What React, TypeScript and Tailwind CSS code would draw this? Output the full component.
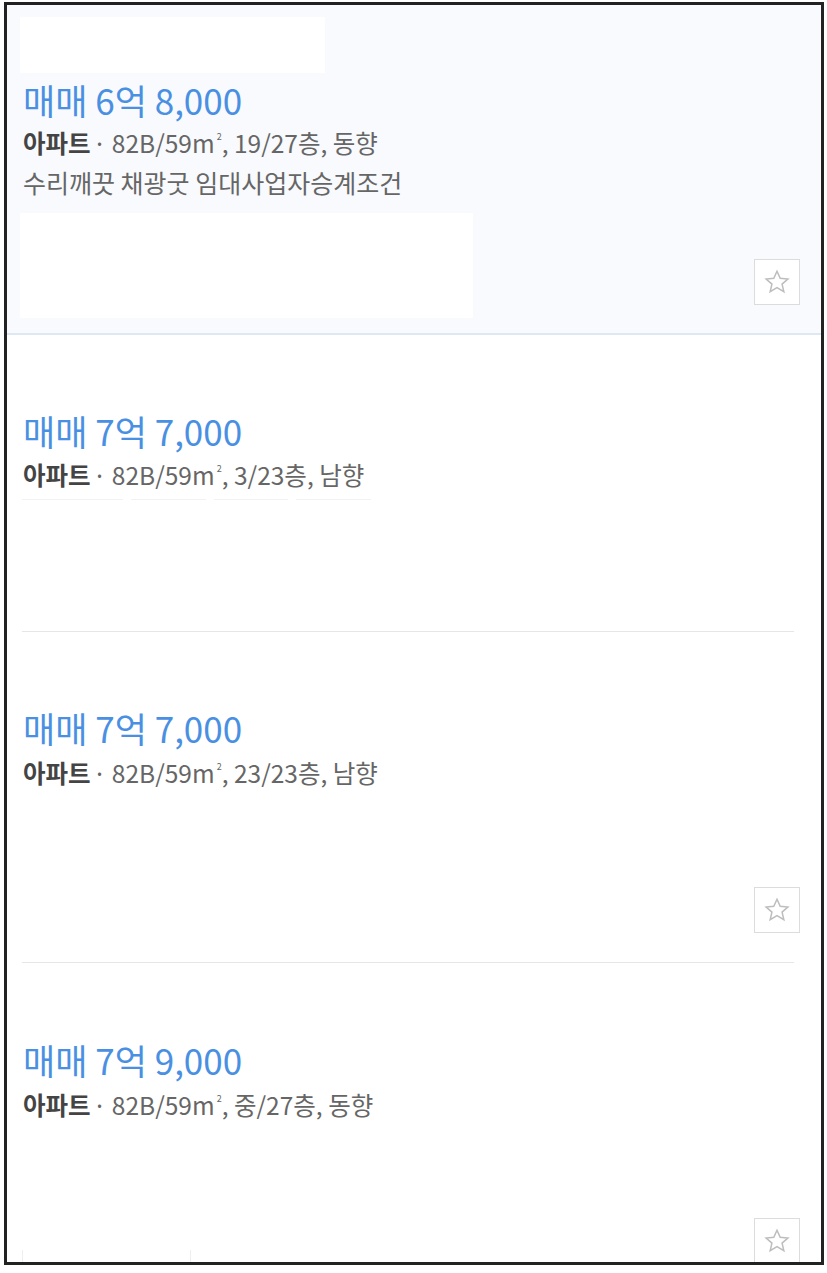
import React from "react";

const FONT = { fontFamily: '"Noto Sans CJK KR", "Noto Sans", sans-serif' };

function StarButton({ className }: { className: string }) {
  return (
    <div
      className={`absolute w-[46px] h-[46px] border border-[#dcdcdc] bg-white flex items-center justify-center ${className}`}
    >
      <svg width="28" height="28" viewBox="0 0 24 24" fill="none" stroke="#bdbdbd" strokeWidth="1.3" strokeLinejoin="miter">
        <path d="M12 2.8l2.75 6.05 6.55.6-4.95 4.35 1.5 6.45L12 16.9l-5.85 3.35 1.5-6.45L2.7 9.45l6.55-.6z" />
      </svg>
    </div>
  );
}

function Title({ text }: { text: string }) {
  return <div className="h-[40px] leading-[40px] text-[35px] text-[#4a90e2] whitespace-nowrap">{text}</div>;
}

function Spec({ floor, dir, className = "" }: { floor: string; dir: string; className?: string }) {
  return (
    <div className={`h-[34px] leading-[34px] text-[24.5px] text-[#666666] whitespace-nowrap ${className}`}>
      <span className="font-bold text-[#444444]">아파트</span>
      <span className="ml-[2px]">· 82B/59m</span>
      <span className="text-[9px] leading-none relative top-[-13px] ml-[2px]">2</span>
      <span>, {floor}층, {dir}</span>
    </div>
  );
}

export default function App() {
  return (
    <div className="w-[827px] h-[1273px] bg-white relative" style={FONT}>
      <div className="ml-[4px] pt-[2px]">
        <div className="w-[820px] h-[1263px] border-[3px] border-[#222222] overflow-hidden flex flex-col">
          {/* Card 1 */}
          <div className="relative h-[330px] shrink-0 bg-[#f8fafd] border-b-2 border-[#dde8f4] pl-[13px] pt-[12px] flex flex-col">
            <div className="w-[305px] h-[56px] bg-white" />
            <div className="mt-[7px] pl-[3px]">
              <Title text="매매 6억 8,000" />
              <Spec floor="19/27" dir="동향" className="mt-[6px]" />
              <div className="mt-[5px] h-[34px] leading-[34px] text-[25px] text-[#666666] whitespace-nowrap">
                수리깨끗 채광굿 임대사업자승계조건
              </div>
            </div>
            <div className="mt-[14px] w-[453px] h-[105px] bg-white" />
            <StarButton className="right-[21px] bottom-[28px]" />
          </div>

          {/* Card 2 */}
          <div className="h-[297px] shrink-0 flex flex-col">
            <div className="flex-1 pl-[16px] pt-[76px]">
              <Title text="매매 7억 7,000" />
              <Spec floor="3/23" dir="남향" className="mt-[7px]" />
              <div className="flex gap-[8px] mt-[7px] ml-[-1px]">
                <div className="w-[101px] h-px bg-[#f2f2f2]" />
                <div className="w-[75px] h-px bg-[#f2f2f2]" />
                <div className="w-[74px] h-px bg-[#f2f2f2]" />
                <div className="w-[75px] h-px bg-[#f2f2f2]" />
              </div>
            </div>
            <div className="ml-[15px] mr-[27px] h-px bg-[#e6e6e6]" />
          </div>

          {/* Card 3 */}
          <div className="relative h-[331px] shrink-0 flex flex-col">
            <div className="flex-1 pl-[16px] pt-[76px]">
              <Title text="매매 7억 7,000" />
              <Spec floor="23/23" dir="남향" className="mt-[8px]" />
            </div>
            <StarButton className="right-[21px] top-[255px]" />
            <div className="ml-[15px] mr-[27px] h-px bg-[#e6e6e6]" />
          </div>

          {/* Card 4 */}
          <div className="relative flex-1 flex flex-col">
            <div className="flex-1 pl-[16px] pt-[77px]">
              <Title text="매매 7억 9,000" />
              <Spec floor="중/27" dir="동향" className="mt-[8px]" />
            </div>
            <StarButton className="right-[21px] top-[255px]" />
            <div className="absolute left-[15px] bottom-0 w-[169px] h-[12px] border-l border-r border-[#eeeeee]" />
          </div>
        </div>
      </div>
    </div>
  );
}
